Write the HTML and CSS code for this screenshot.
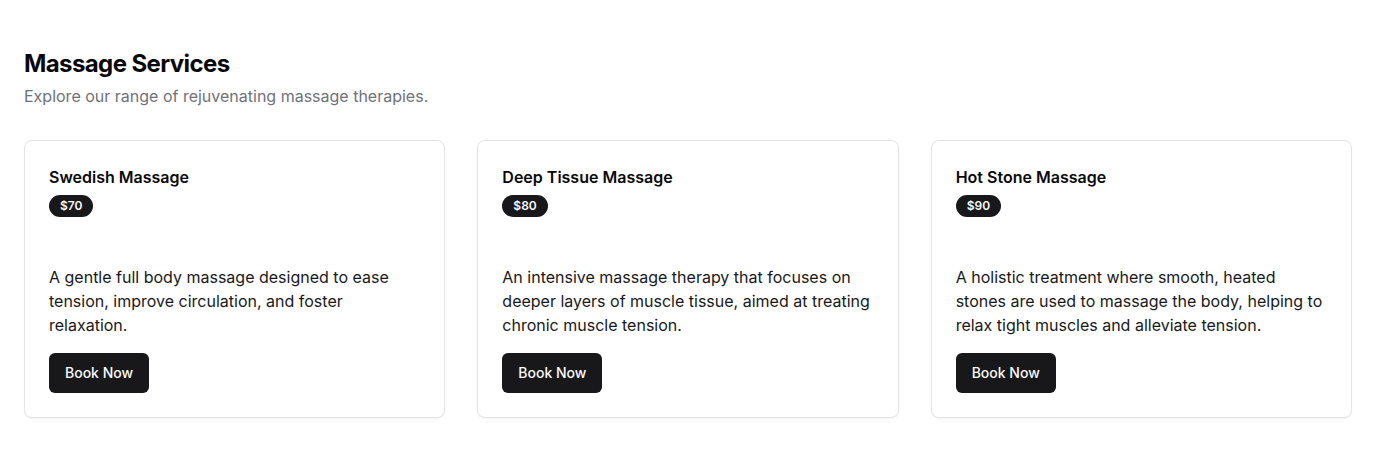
FILE: index.html
```html
<!DOCTYPE html>
<html lang="en">
<head>
<meta charset="utf-8">
<title>Massage Services</title>
<link rel="stylesheet" href="styles.css">
</head>
<body>
<main class="page">
  <header class="intro">
    <h2 class="heading">Massage Services</h2>
    <p class="subtitle">Explore our range of rejuvenating massage therapies.</p>
  </header>
  <section class="grid">
    <article class="card">
      <div class="card-header">
        <h3 class="card-title">Swedish Massage</h3>
        <span class="badge">$70</span>
      </div>
      <div class="card-content">
        <p class="desc">A gentle full body massage designed to ease tension, improve circulation, and foster relaxation.</p>
        <button class="btn" type="button">Book Now</button>
      </div>
    </article>
    <article class="card">
      <div class="card-header">
        <h3 class="card-title">Deep Tissue Massage</h3>
        <span class="badge">$80</span>
      </div>
      <div class="card-content">
        <p class="desc">An intensive massage therapy that focuses on deeper layers of muscle tissue, aimed at treating chronic muscle tension.</p>
        <button class="btn" type="button">Book Now</button>
      </div>
    </article>
    <article class="card">
      <div class="card-header">
        <h3 class="card-title">Hot Stone Massage</h3>
        <span class="badge">$90</span>
      </div>
      <div class="card-content">
        <p class="desc">A holistic treatment where smooth, heated stones are used to massage the body, helping to relax tight muscles and alleviate tension.</p>
        <button class="btn" type="button">Book Now</button>
      </div>
    </article>
  </section>
</main>
</body>
</html>
```
FILE: styles.css
```css
* { box-sizing: border-box; }
html, body { margin: 0; padding: 0; background: #ffffff; }
body {
  font-family: Inter, "Noto Sans", "Liberation Sans", sans-serif;
  color: #09090b;
  -webkit-font-smoothing: antialiased;
}
.page {
  padding: 48px 24px;
}
.intro {
  margin-bottom: 32px;
}
.heading {
  margin: 0;
  font-size: 24px;
  line-height: 32px;
  font-weight: 700;
  letter-spacing: -0.025em;
  color: #09090b;
}
.subtitle {
  margin: 4px 0 0;
  font-size: 16px;
  line-height: 24px;
  color: #71717a;
}
.grid {
  display: grid;
  grid-template-columns: repeat(3, 1fr);
  gap: 32px;
}
.card {
  border: 1px solid #e4e4e7;
  border-radius: 8px;
  background: #fff;
  box-shadow: 0 1px 2px rgba(0,0,0,0.05);
  display: flex;
  flex-direction: column;
}
.card-header {
  padding: 24px 24px 0;
  display: flex;
  flex-direction: column;
  align-items: flex-start;
  gap: 6px;
}
.card-title {
  margin: 0;
  font-size: 16px;
  line-height: 24px;
  font-weight: 600;
  color: #09090b;
}
.badge {
  display: inline-flex;
  align-items: center;
  border: 1px solid transparent;
  border-radius: 9999px;
  background: #18181b;
  color: #fafafa;
  font-size: 12px;
  line-height: 16px;
  font-weight: 600;
  padding: 2px 10px;
}
.card-content {
  padding: 48px 24px 24px;
}
.desc {
  margin: 0 0 16px;
  font-size: 16px;
  line-height: 24px;
  color: #18181b;
}
.btn {
  display: inline-flex;
  align-items: center;
  justify-content: center;
  height: 40px;
  padding: 0 16px 1px;
  border: 0;
  border-radius: 6px;
  background: #18181b;
  color: #fafafa;
  font-family: inherit;
  font-size: 14px;
  line-height: 20px;
  font-weight: 500;
  cursor: pointer;
}
```
